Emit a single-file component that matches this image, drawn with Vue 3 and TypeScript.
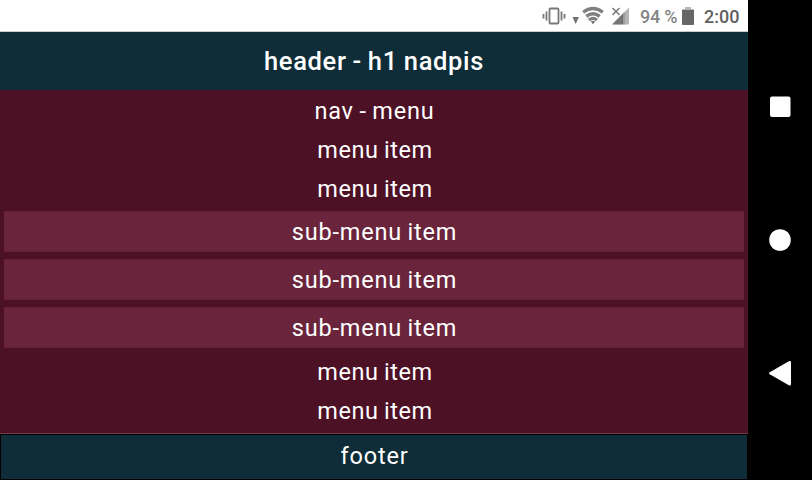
<script setup lang="ts">
interface Entry {
  label: string
  children?: string[]
}

const entries: Entry[] = [
  { label: 'menu item' },
  { label: 'menu item', children: ['sub-menu item', 'sub-menu item', 'sub-menu item'] },
  { label: 'menu item' },
  { label: 'menu item' },
]
</script>

<template>
  <div class="device">
    <div class="screen">
      <div class="status">
        <svg class="status-icons" width="90" height="24" viewBox="0 0 90 24">
          <g fill="none" stroke="#777" stroke-width="1.8">
            <rect x="8.5" y="4.5" width="9" height="15" rx="1" />
            <path d="M5.5 7.5v9M20.5 7.5v9M2.5 10v4.5M23.5 10v4.5" />
          </g>
          <path d="M31.5 13h6.4l-3.2 7z" fill="#707070" />
          <g fill="none" stroke="#808080" stroke-width="3.3">
            <path d="M42.2 8.2Q52 .8 61.800 8.200" />
            <path d="M45.3 12.4Q52 7 58.7 12.4" />
            <path d="M48 16.1Q52 12.7 56 16.1" />
          </g>
          <path d="M49.8 17.3Q52 16 54.2 17.3L52 20.5z" fill="#777" />
          <path d="M71 20.5h11v-11z" fill="#707070" />
          <path d="M82 9.5L88 3.5v17h-6z" fill="#b5b5b5" />
          <path d="M75 16.5v4M79 12.5v8M83 8.5v12" stroke="#858585" stroke-width="1" />
          <path d="M71.5 4l7 7M78.5 4l-7 7" stroke="#707070" stroke-width="1.3" />
        </svg>
        <span class="percent">94 %</span>
        <svg class="battery" width="12" height="18" viewBox="0 0 12 18">
          <path d="M3 0h6v2h3v2H0V2h3z" fill="#b8b8b8" />
          <path d="M0 3h12v14a1 1 0 0 1-1 1H1a1 1 0 0 1-1-1z" fill="#666" />
        </svg>
        <span class="clock">2:00</span>
      </div>
      <header class="header"><h1>header - h1 nadpis</h1></header>
      <nav class="nav">
        <div class="title">nav - menu</div>
        <ul class="menu">
          <li v-for="(entry, i) in entries" :key="i">
            <div class="item">{{ entry.label }}</div>
            <ul v-if="entry.children" class="submenu">
              <li v-for="(child, j) in entry.children" :key="j" class="subitem">{{ child }}</li>
            </ul>
          </li>
        </ul>
      </nav>
      <footer class="footer"><span>footer</span></footer>
    </div>
    <div class="keys">
      <svg width="64" height="480" viewBox="0 0 64 480" fill="#fff">
        <rect x="22" y="96.5" width="20.5" height="20.5" rx="2" />
        <circle cx="32" cy="240" r="10.8" />
        <path d="M21.8 372.2L40.8 361.3Q43 360.3 43 362.5V384Q43 386.3 40.8 385.2L21.8 374.3Q20.3 373.3 21.8 372.2z" />
      </svg>
    </div>
  </div>
</template>

<style>
body {
  background: #000;
}
</style>

<style scoped>
* {
  box-sizing: border-box;
}
ul {
  list-style: none;
  margin: 0;
  padding: 0;
}
.device {
  display: flex;
  width: 812px;
  height: 480px;
  background: #000;
  overflow: hidden;
}
.screen {
  width: 748px;
  height: 480px;
  display: flex;
  flex-direction: column;
  font-family: Roboto, sans-serif;
  font-size: 23.5px;
  letter-spacing: 0.8px;
  word-spacing: -1px;
  color: #fff;
  text-align: center;
}
.status {
  height: 32px;
  flex: none;
  display: flex;
  align-items: center;
  padding: 1px 8px 0 541px;
  background: #fff;
  border-bottom: 1px solid #c8cdcf;
  font-size: 18px;
  letter-spacing: 0;
  word-spacing: 0;
  white-space: nowrap;
}
.status-icons {
  flex: none;
}
.percent {
  margin-left: 9px;
  width: 42px;
  text-align: left;
  color: #858585;
  font-weight: 500;
  letter-spacing: -0.2px;
}
.battery {
  flex: none;
}
.clock {
  margin-left: 10px;
  color: #606060;
  font-weight: 500;
}
.header {
  height: 58px;
  flex: none;
  background: #0e2d38;
}
.header h1 {
  margin: 0;
  font-size: 25.5px;
  line-height: 59px;
  font-weight: 500;
  letter-spacing: 0.65px;
}
.nav {
  height: 344px;
  flex: none;
  background: #4d1126;
  border-bottom: 1px solid #713d4c;
}
.title {
  height: 40px;
  line-height: 43px;
  padding-left: 1px;
}
.item {
  height: 39px;
  line-height: 40px;
  letter-spacing: 0.55px;
  padding-left: 2px;
}
.submenu {
  display: flex;
  flex-direction: column;
  gap: 7px;
  padding: 3px 4px 4px;
}
.subitem {
  height: 41px;
  line-height: 40px;
  padding-left: 1px;
  background: #6a253d;
  border-top: 1px solid #642038;
  border-bottom: 1px solid #642038;
}
.footer {
  height: 46px;
  padding: 1px;
  background: #000;
}
.footer span {
  display: block;
  height: 44px;
  line-height: 43px;
  padding-left: 1px;
  background: #0e2d38;
}
.keys {
  width: 64px;
}
.keys svg {
  display: block;
}
</style>
